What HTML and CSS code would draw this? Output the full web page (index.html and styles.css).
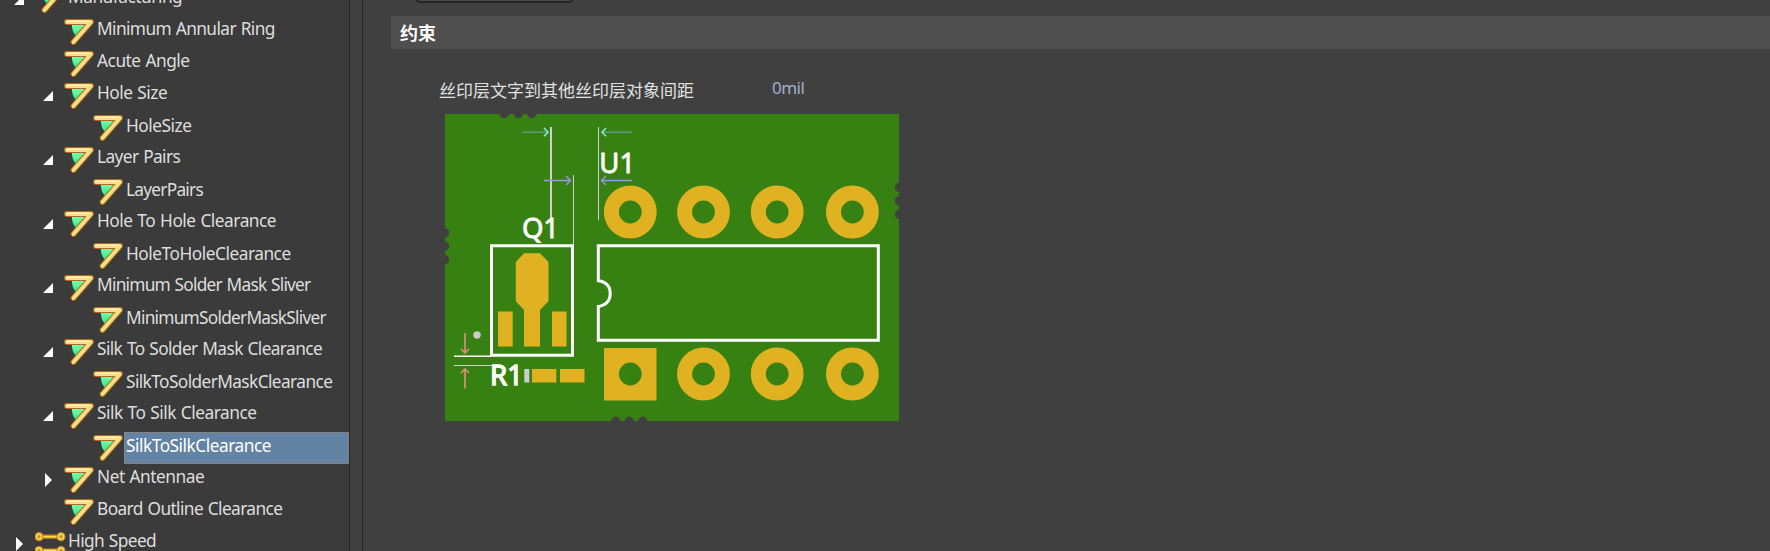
FILE: index.html
```
<!DOCTYPE html>
<html lang="zh-CN">
<head>
<meta charset="utf-8">
<title>PCB Rules</title>
<link rel="stylesheet" href="styles.css">
</head>
<body>
<svg class="defs" width="0" height="0">
  <defs>
    <linearGradient id="mint" x1="0" y1="0" x2="0" y2="1"><stop offset="0" stop-color="#8cf7b4"/><stop offset="1" stop-color="#1bee78"/></linearGradient>
    <symbol id="rule" viewBox="0 0 31 27">
      <path d="M7.800 4.500H23L12.500 17.500Q7.500 12.500 7.800 4.500Z" fill="url(#mint)"/>
      <path d="M3 3H27L9.500 23" fill="none" stroke="#b5691d" stroke-width="5.800" stroke-linecap="round" stroke-linejoin="round"/>
      <path d="M3 3H27L9.500 23" fill="none" stroke="#f6e086" stroke-width="3.900" stroke-linecap="round" stroke-linejoin="round"/>
      <path d="M3 2.300H26" fill="none" stroke="#fff3c8" stroke-width="1.200" stroke-linecap="round"/>
    </symbol>
    <symbol id="speed" viewBox="0.5 -0.7 31 27">
      <g stroke="#c8821c" stroke-width="1.200">
        <path d="M5 3.500H26V6.500H5Z" fill="#ffe24e"/><circle cx="4.500" cy="5" r="4" fill="#f6d65b"/><circle cx="26.500" cy="5" r="4" fill="#f6d65b"/>
        <path d="M5 17.300H26V20.300H5Z" fill="#ffe24e"/><circle cx="4.500" cy="18.800" r="4" fill="#f6d65b"/><circle cx="26.500" cy="18.800" r="4" fill="#f6d65b"/>
      </g>
      <g fill="#c19a24"><circle cx="4.500" cy="5" r="1.700"/><circle cx="26.500" cy="5" r="1.700"/><circle cx="4.500" cy="18.800" r="1.700"/><circle cx="26.500" cy="18.800" r="1.700"/></g>
    </symbol>
    <symbol id="open" viewBox="0 0 10 10"><path d="M10 0V10H0Z" fill="#fff"/></symbol>
    <symbol id="shut" viewBox="0 0 10 14"><path d="M2 0L9 7L2 14Z" fill="#fff"/></symbol>
  </defs>
</svg>
<div class="app">
  <nav class="tree">
    <div class="row d0"><svg class="tw"><use href="#open"/></svg><svg class="ic"><use href="#rule"/></svg><span class="name">Manufacturing</span></div>
    <div class="row d1"><i class="tw"></i><svg class="ic"><use href="#rule"/></svg><span class="name tight">Minimum Annular Ring</span></div>
    <div class="row d1"><i class="tw"></i><svg class="ic"><use href="#rule"/></svg><span class="name">Acute Angle</span></div>
    <div class="row d1"><svg class="tw"><use href="#open"/></svg><svg class="ic"><use href="#rule"/></svg><span class="name">Hole Size</span></div>
    <div class="row d2"><i class="tw"></i><svg class="ic"><use href="#rule"/></svg><span class="name">HoleSize</span></div>
    <div class="row d1"><svg class="tw"><use href="#open"/></svg><svg class="ic"><use href="#rule"/></svg><span class="name tight">Layer Pairs</span></div>
    <div class="row d2"><i class="tw"></i><svg class="ic"><use href="#rule"/></svg><span class="name tighter">LayerPairs</span></div>
    <div class="row d1"><svg class="tw"><use href="#open"/></svg><svg class="ic"><use href="#rule"/></svg><span class="name">Hole To Hole Clearance</span></div>
    <div class="row d2"><i class="tw"></i><svg class="ic"><use href="#rule"/></svg><span class="name">HoleToHoleClearance</span></div>
    <div class="row d1"><svg class="tw"><use href="#open"/></svg><svg class="ic"><use href="#rule"/></svg><span class="name tighter">Minimum Solder Mask Sliver</span></div>
    <div class="row d2"><i class="tw"></i><svg class="ic"><use href="#rule"/></svg><span class="name tighter">MinimumSolderMaskSliver</span></div>
    <div class="row d1"><svg class="tw"><use href="#open"/></svg><svg class="ic"><use href="#rule"/></svg><span class="name tight">Silk To Solder Mask Clearance</span></div>
    <div class="row d2"><i class="tw"></i><svg class="ic"><use href="#rule"/></svg><span class="name tight">SilkToSolderMaskClearance</span></div>
    <div class="row d1"><svg class="tw"><use href="#open"/></svg><svg class="ic"><use href="#rule"/></svg><span class="name">Silk To Silk Clearance</span></div>
    <div class="row d2"><i class="tw"></i><svg class="ic"><use href="#rule"/></svg><span class="name selected">SilkToSilkClearance</span></div>
    <div class="row d1"><svg class="tw shut"><use href="#shut"/></svg><svg class="ic"><use href="#rule"/></svg><span class="name">Net Antennae</span></div>
    <div class="row d1"><i class="tw"></i><svg class="ic"><use href="#rule"/></svg><span class="name tight">Board Outline Clearance</span></div>
    <div class="row d0"><svg class="tw shut"><use href="#shut"/></svg><svg class="ic"><use href="#speed"/></svg><span class="name tight">High Speed</span></div>
  </nav>
  <div class="splitter"></div>
  <main class="detail">
    <div class="field"></div>
    <h2 class="heading">约束</h2>
    <div class="param"><span class="label">丝印层文字到其他丝印层对象间距</span><span class="value">0mil</span></div>
    <svg class="board" viewBox="445 114 454 307">
      <rect x="445" y="114" width="454" height="307" fill="#378012"/>
      <g fill="#404040">
        <circle cx="504.300" cy="113.500" r="4.700"/><circle cx="518.200" cy="113.500" r="4.700"/><circle cx="531.800" cy="113.500" r="4.700"/>
        <circle cx="444.500" cy="232.700" r="4.700"/><circle cx="444.500" cy="246" r="4.700"/><circle cx="444.500" cy="259.500" r="4.700"/>
        <circle cx="899.500" cy="187.300" r="4.700"/><circle cx="899.500" cy="200.700" r="4.700"/><circle cx="899.500" cy="214.300" r="4.700"/>
        <circle cx="615.700" cy="421.500" r="4.700"/><circle cx="629.300" cy="421.500" r="4.700"/><circle cx="642.700" cy="421.500" r="4.700"/>
      </g>
      <!-- dimension extension lines -->
      <g stroke="#cfcfcf" fill="none">
        <path d="M551 127V219.500" stroke-width="2"/>
        <path d="M598.500 127V220M573.500 175V244M454 365.500H498"/>
        <path d="M454 356.300H491" stroke="#fff" stroke-width="1.500"/>
      </g>
      <!-- through-hole pads -->
      <g fill="none" stroke="#e0b121" stroke-width="15">
        <circle cx="630.300" cy="212" r="18.900"/><circle cx="703.500" cy="212" r="18.900"/><circle cx="777.200" cy="212" r="18.900"/><circle cx="852.400" cy="212" r="18.900"/>
        <circle cx="703.500" cy="374" r="18.900"/><circle cx="777.200" cy="374" r="18.900"/><circle cx="852.400" cy="374" r="18.900"/>
      </g>
      <g fill="#e0b121">
        <path d="M604 348H656.500V400.500H604Z"/>
        <path d="M524 253.300H540L548.500 262V301.300L540 310V346.500H524V310L515.800 301.300V262Z"/>
        <path d="M498 311.500H512.700V346.500H498ZM552 311.500H566.500V346.500H552Z"/>
        <path d="M532 369H556.300V382.500H532ZM560 369H584.500V382.500H560Z"/>
      </g>
      <circle cx="630.300" cy="374" r="11.400" fill="#378012"/>
      <path d="M524.300 369H529.300V382.500H524.300Z" fill="#ccc"/>
      <circle cx="477" cy="335" r="3.700" fill="#ccc"/>
      <!-- component outlines -->
      <g fill="none" stroke="#fff" stroke-width="3">
        <path d="M491.500 245.700H572.500V355.300H491.500Z"/>
        <path d="M598.300 281.500V245.700H878.300V340.200H598.300V305.500M597 280.500C606 281.500 610.200 286 610.200 293.500C610.200 301 606 305.500 597 306.800"/>
      </g>
      <!-- dimension arrows -->
      <g fill="none" stroke="#8beee0" stroke-width="1.500">
        <path d="M522 132.300H546M603 132.300H632" stroke="#579b82"/>
        <path d="M544 128L548 132.300L544 136.300M606 128L602 132.300L606 136.300"/>
      </g>
      <path d="M544 180.500H570M566 176L570.500 180.500L566 185M632 180.500H602M606 176L601.500 180.500L606 185" fill="none" stroke="#9c94ef" stroke-width="1.400"/>
      <path d="M465 333V353M461 349L465 353L469 349M465 388.500V369M461 373L465 369L469 373" fill="none" stroke="#d88f78" stroke-width="1.700"/>
      <g class="ref">
        <text x="599.300" y="172.500" textLength="36">U1</text>
        <text x="522" y="238" textLength="37">Q1</text>
        <text class="heavy" x="490" y="385" textLength="33">R1</text>
      </g>
    </svg>
  </main>
</div>
</body>
</html>
```
FILE: styles.css
```
body {
  margin: 0;
  background: #404040;
  font-family: "Noto Sans", "Noto Sans CJK SC", sans-serif;
}
.defs { display: block; width: 0; height: 0; }
.app {
  display: flex;
  width: 1770px;
  height: 551px;
  overflow: hidden;
}
.tree {
  box-sizing: border-box;
  width: 349px;
  flex: none;
  background: #3b3b3b;
  margin-top: -16px;
}
.row {
  display: flex;
  height: 32px;
}
.d0 { padding-left: 14px; }
.d1 { padding-left: 43px; }
.d2 { padding-left: 72px; }
.tw {
  width: 10px;
  height: 10px;
  margin: 11px 11px 0 0;
  flex: none;
}
.tw.shut { height: 14px; margin-top: 9px; }
.ic {
  width: 31px;
  height: 27px;
  margin-top: 3px;
  flex: none;
}
.name {
  box-sizing: border-box;
  flex: 1;
  padding-left: 2px;
  color: #dedede;
  font-size: 17.3px;
  line-height: 26px;
  letter-spacing: -0.48px;
  word-spacing: 0.8px;
  white-space: nowrap;
}
.d2 .name { line-height: 28px; }
.tight { letter-spacing: -0.6px; }
.tighter { letter-spacing: -0.75px; }
.d2 .name.selected {
  border: 1px dotted #a9825e;
  padding-left: 1px;
  background: #6283a3;
  color: #fff;
  line-height: 26px;
}
.splitter {
  box-sizing: border-box;
  width: 14px;
  flex: none;
  border: solid #252525;
  border-width: 0 1px;
  background: #404040;
}
.detail {
  flex: 1;
  padding-left: 28px;
}
.field {
  box-sizing: border-box;
  width: 157px;
  height: 13px;
  margin: -10px 0 13px 25px;
  border: 2px solid #252525;
  border-radius: 4px;
  background: #4a4a4a;
}
.heading {
  height: 33px;
  margin: 0;
  padding-left: 9px;
  background: #4f4f4f;
  color: #fff;
  font: bold 18px/32px "Noto Sans CJK SC", sans-serif;
}
.param {
  display: flex;
  height: 65px;
  padding-left: 48px;
}
.label {
  width: 333px;
  color: #e0e0e0;
  font: 17px/81px "Noto Sans CJK SC", sans-serif;
}
.value {
  color: #a0aecb;
  font-size: 17px;
  line-height: 78px;
  letter-spacing: -0.5px;
}
.board {
  display: block;
  width: 454px;
  height: 307px;
  margin-left: 54px;
}
.ref {
  fill: #fff;
  stroke: #fff;
  stroke-width: 0.8px;
  font: 400 27.5px "Noto Sans", sans-serif;
}
.heavy { stroke-width: 1.3px; }
```
